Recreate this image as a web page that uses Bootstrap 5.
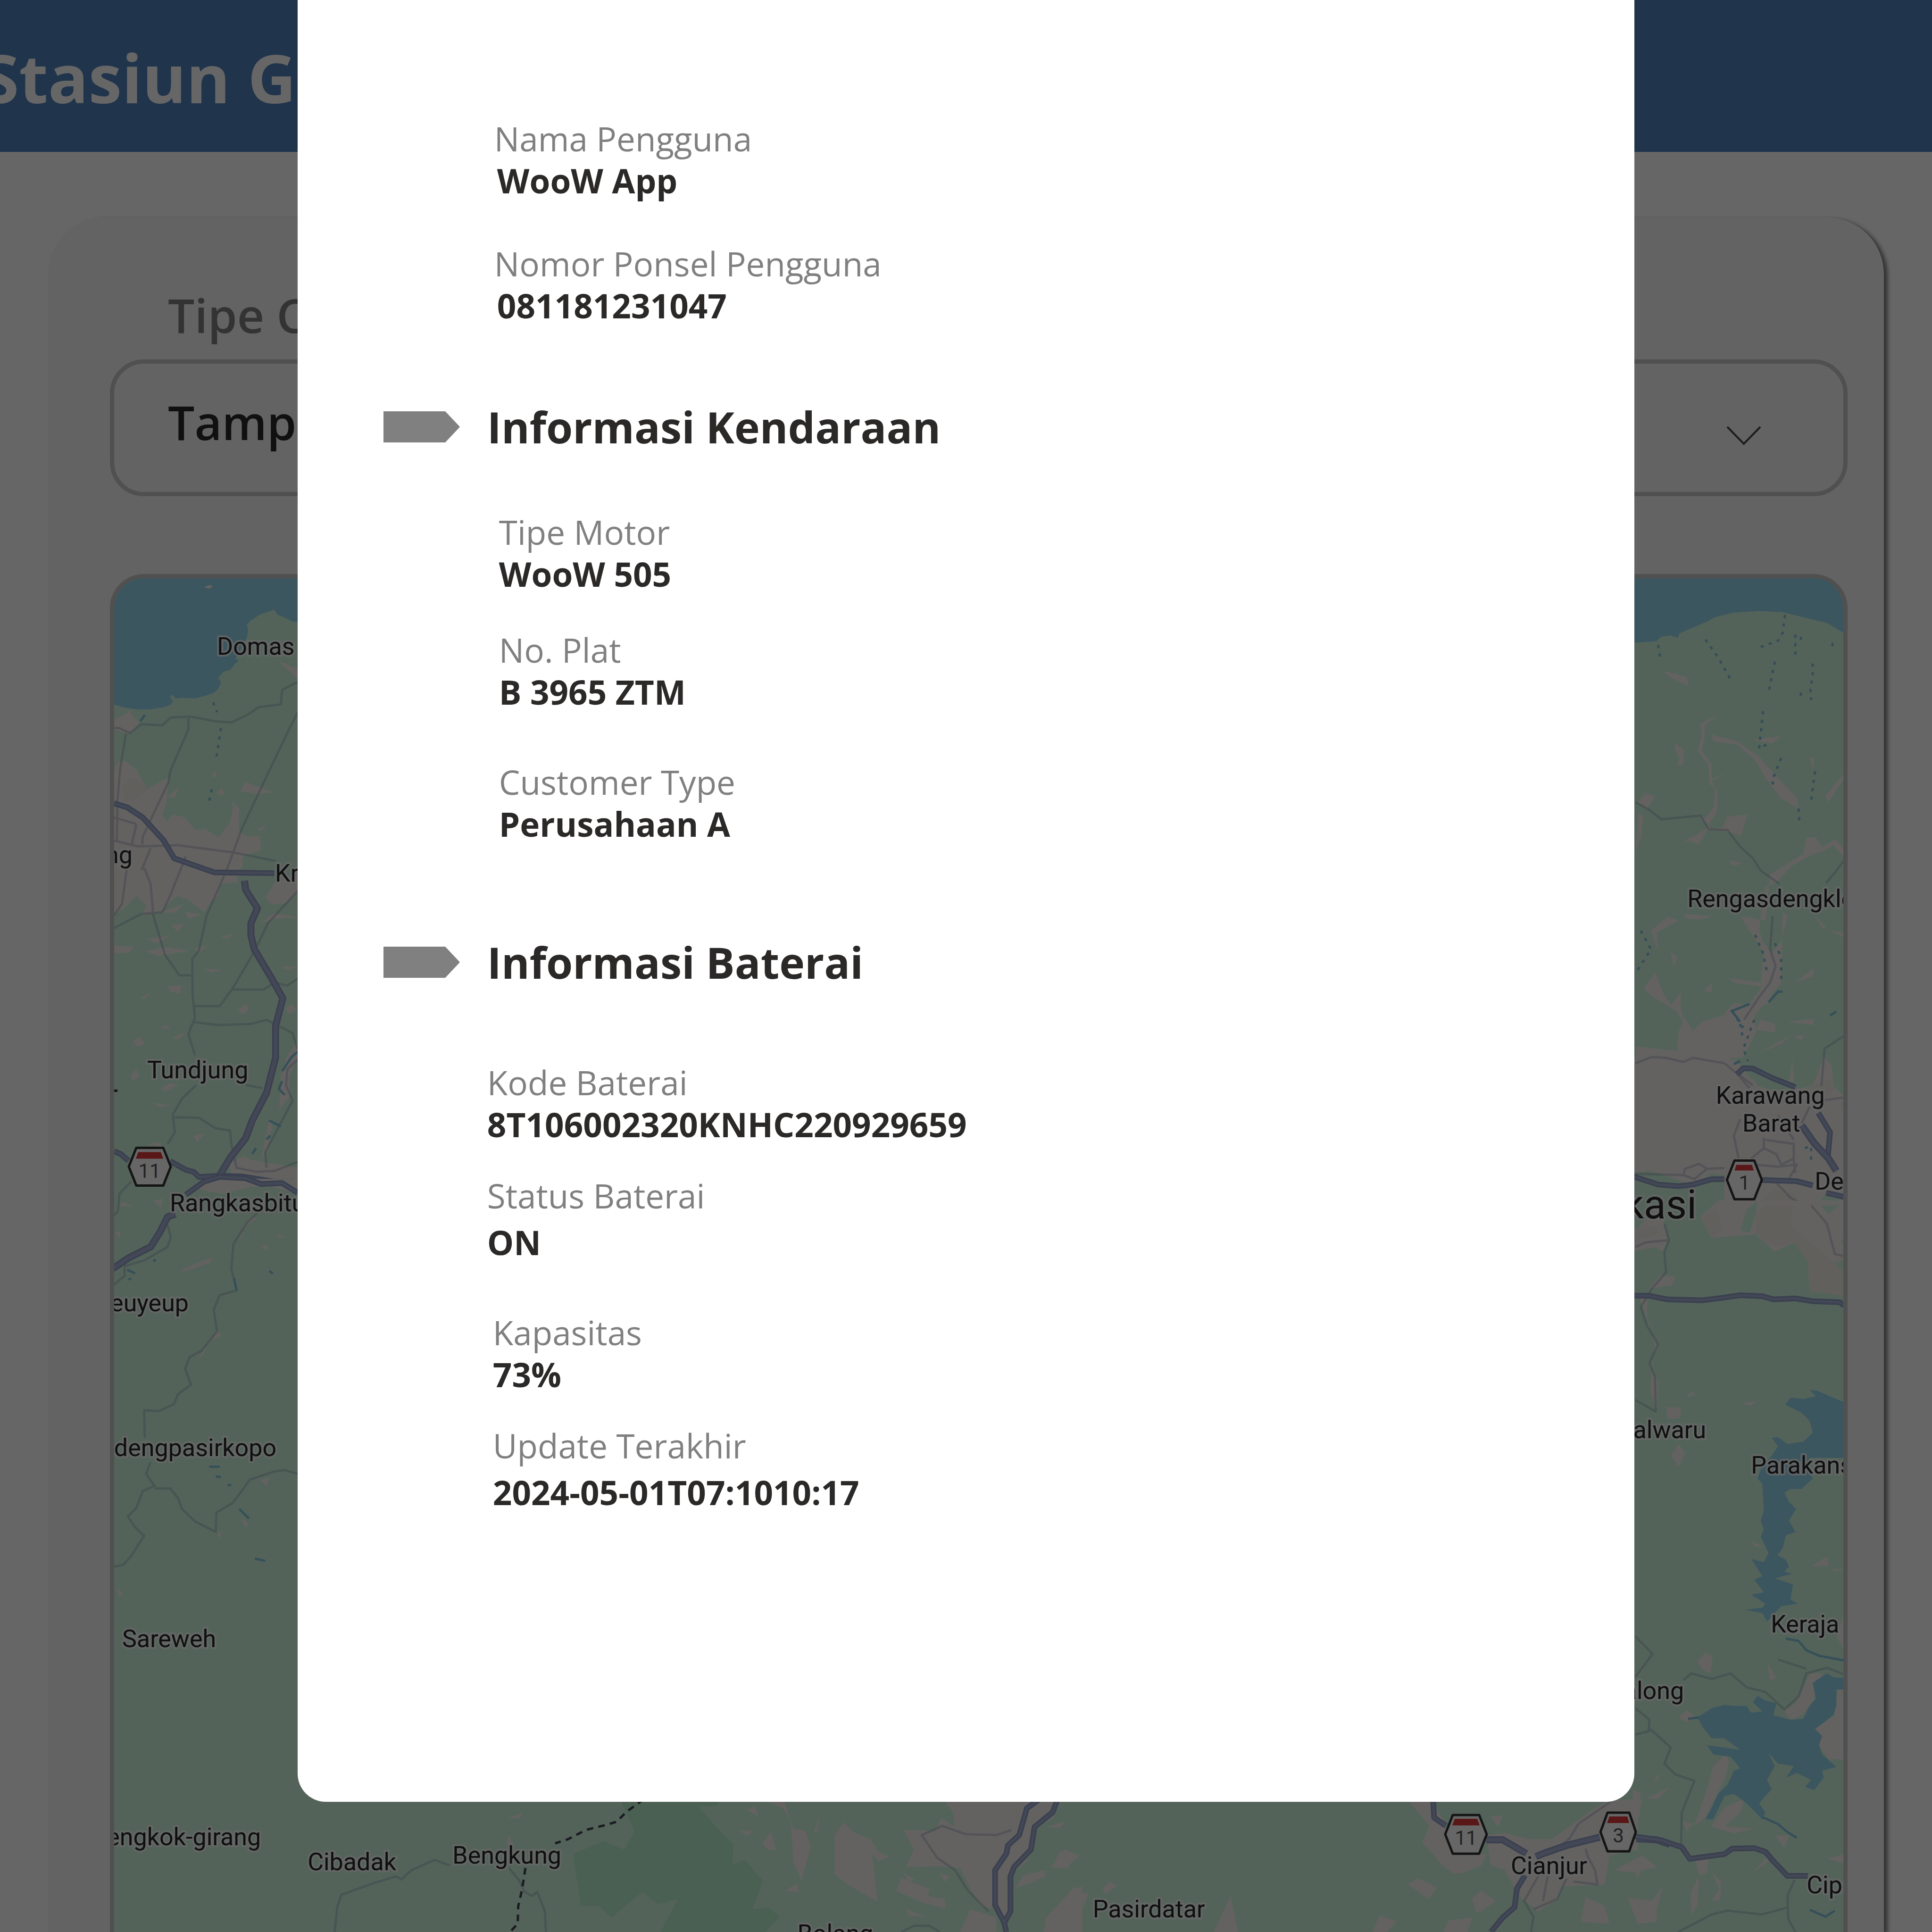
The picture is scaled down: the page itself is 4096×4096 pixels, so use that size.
<!DOCTYPE html>
<html lang="id">
<head>
<meta charset="utf-8">
<meta name="viewport" content="width=device-width, initial-scale=1">
<title>Stasiun Ganti Baterai</title>
<link href="https://cdn.jsdelivr.net/npm/bootstrap@5.3.0/dist/css/bootstrap.min.css" rel="stylesheet">
<style>
  body { font-family: "Open Sans", "Noto Sans", sans-serif; background: #fff; }
  .topbar { background: #5082be; height: 322px; padding: 6px 0 0; }
  .topbar-title { color: #fff; font-size: 142px; line-height: 190px; font-weight: 700; margin-left: -38px; white-space: nowrap; }
  .panel { background: #f8f8f8; margin: 139px 102px 0; padding: 138px 77px 0 131px; border-radius: 120px 120px 0 0; box-shadow: 8px 4px 8px rgba(0, 0, 0, .5); }
  .filter-label { color: #808080; font-size: 100px; line-height: 136px; font-weight: 600; margin: 0 0 27px 123px; }
  .filter-select { height: 290px; border: 9px solid #c8c8c8; border-radius: 72px; background: transparent; color: #282828; font-size: 100px; line-height: 136px; font-weight: 600; padding: 0 280px 26px 114px; appearance: none; }
  .filter-chevron { right: 183px; top: 140px; width: 74px; height: 44px; pointer-events: none; }
  .map-frame { border: 9px solid #c8c8c8; border-bottom: 0; border-radius: 72px 72px 0 0; margin-top: 165px; overflow: hidden; min-height: 0; background: #d2f8e0; }
  .map-frame svg { width: 100%; height: 100%; }
  .map-frame path { vector-effect: non-scaling-stroke; }
  .place { font: 400 52px Roboto, sans-serif; fill: #262626; stroke: #fff; stroke-width: 8px; stroke-linejoin: round; paint-order: stroke; stroke-opacity: .8; }
  .place-city { font-size: 86px; }
  .route-no { font: 400 42px Roboto, sans-serif; fill: #555; text-anchor: middle; }
  .land { fill: #faf6f2; }
  .sand { fill: #f6f0e6; }
  .water { fill: #94d8ee; }
  .forest { fill: #b8f0ce; }
  .field-green { fill: #d2f8e0; }
  .edge-a, .edge-b, .mid-a, .mid-b { fill: none; stroke-linejoin: round; }
  .edge-a { stroke: #92a0c6; stroke-width: 12px; }
  .edge-b { stroke: #92a0c6; stroke-width: 15px; }
  .mid-a { stroke: #a9b3d6; stroke-width: 5px; }
  .mid-b { stroke: #aab3d8; stroke-width: 8px; }
  .minor { fill: none; stroke: rgba(100, 120, 165, .27); stroke-width: 5px; stroke-linejoin: round; }
  .rail { fill: none; stroke: #445; stroke-width: 5px; stroke-dasharray: 14 11; }
  .canal { fill: none; stroke: #86c4d8; stroke-width: 5px; stroke-dasharray: 7 11; }
  .creek { fill: none; stroke: #86c8de; stroke-width: 5px; }
  .modal-backdrop { --bs-backdrop-opacity: .6; width: 100%; height: 100%; }
  .detail-dialog { max-width: 69.2vw; margin: 0 auto; }
  .detail-content { border: 0; border-radius: 0 0 60px 60px; padding: 250px 182px 611px; color: #2b2928; }
  .section-title { font-size: 91px; line-height: 126px; font-weight: 700; gap: 58px; }
  .section-vehicle { margin: 149px 0 116px; }
  .section-battery { margin: 185px 0 148px; }
  .section-arrow { width: 162px; height: 66px; flex: none; }
  .fields-user { margin: 0 0 0 235px; }
  .fields-vehicle { margin: 0 0 0 245px; }
  .fields-battery { margin: 0 0 0 220px; }
  .fields-charge { margin: 0 0 0 232px; }
  .field dt { font-size: 71px; line-height: 88px; font-weight: 400; color: #808080; }
  .field dd { font-size: 71px; line-height: 90px; font-weight: 700; margin: 0; }
  .fields-user dd { padding-left: 6px; }
  .gap-s { margin-top: 62px; }
  .gap-m { margin-top: 72px; }
  .gap-l { margin-top: 87px; }
  .gap-xl { margin-top: 102px; }
  .field.airy dd { padding-top: 10px; }
</style>
</head>
<body class="vh-100 overflow-hidden d-flex flex-column">
<nav class="navbar topbar flex-shrink-0">
  <h1 class="topbar-title mb-0">Stasiun Ganti Baterai</h1>
</nav>
<main class="panel flex-grow-1 d-flex flex-column overflow-hidden">
  <label class="filter-label" for="customerType">Tipe Customer</label>
  <div class="position-relative flex-shrink-0">
    <select class="filter-select w-100 d-block" id="customerType"><option>Tampilkan Semua</option></select>
    <svg class="filter-chevron position-absolute" viewBox="0 0 74 44" fill="none" stroke="#484848" stroke-width="4" aria-hidden="true"><path d="M2 3 37 39 72 3"/></svg>
  </div>
  <div class="map-frame flex-grow-1">
    <svg viewBox="242 1227 3666 2869" preserveAspectRatio="xMinYMin slice" role="img" aria-label="Peta stasiun">
      <!-- north-west -->
      <g transform="matrix(.2759 0 0 .8359 222.8 1205.9)">
        <path class="water" d="M60 0H1500V137L1440 135 1380 125 1325 118 1300 105 1255 110 1190 117 1120 132 1088 143 1100 155 1090 175 1000 230 1030 233 990 245 960 258 910 262 868 278 892 290 870 305 840 315 780 322 690 330 600 328 540 330 515 320 498 325 522 338 500 346 450 352 340 358 250 358 150 353 60 345Z"/>
        <path class="land" d="M760 48 800 42 830 46 800 52ZM60 385 150 372 190 360 210 375 260 390 200 418 130 415 60 408ZM60 520 100 490 150 488 240 510 320 560 430 540 485 533 470 590 440 625 475 642 520 625 600 630 700 665 760 660 870 682 960 645 985 605 970 590 1030 608 1025 665 1080 680 1190 680 1195 715 1120 722 1060 730 1050 758 1010 775 1020 795 890 800 870 830 800 850 760 872 640 840 560 830 500 845 430 870 280 880 320 855 240 830 150 860 60 880ZM1230 835 1300 800 1490 770 1490 820 1380 850 1280 852ZM1040 565 1080 542 1290 568 1180 572ZM480 580 560 555 540 580ZM855 570 900 558 915 575ZM820 528 850 512 850 528ZM1170 660 1240 652 1200 666ZM1330 235 1480 255 1480 280ZM1190 900 1300 875 1480 885 1300 888ZM60 955 220 960 180 975 60 975ZM400 875 600 852 540 872ZM620 872 735 878 640 888ZM510 905 600 902 560 922ZM320 940 500 932 400 950ZM690 965 790 955 720 975ZM890 935 990 925 930 940ZM310 970 480 960 640 970 400 982ZM480 1060 580 1058 580 1078 500 1072ZM270 1090 350 1075 300 1092ZM760 1015 890 1018 820 1024ZM1020 1120 1090 1105 1100 1120 1060 1130ZM1350 1012 1480 1008 1400 1018ZM1390 1115 1440 1105 1470 1120 1410 1130ZM420 1165 470 1158 500 1168ZM215 1200 260 1188 310 1205 250 1212ZM520 1190 620 1175 560 1195ZM200 1285 240 1270 260 1290 210 1298ZM680 1440 760 1432 710 1455ZM370 1355 500 1362 420 1366ZM430 1320 500 1305 560 1310 470 1325ZM330 1460 420 1455 440 1470ZM1350 1290 1400 1235 1480 1200 1480 1240 1410 1290 1420 1340 1340 1370ZM1200 1500 1260 1400 1290 1400 1250 1470ZM960 1510 1060 1490 1120 1500 1480 1520 1480 1568 980 1568Z"/>
        <path class="sand" d="M130 550 210 530 300 545 320 560 260 585 150 590Z"/>
        <path class="minor" d="M70 405 110 405 190 418 280 395 440 398 505 378 660 376 850 388 970 391 1100 370 1180 352 1350 345 1360 308 1480 288M640 380 640 408 500 515 490 540 290 680 285 700M1480 365 1410 410 1050 660 940 760 780 880 720 970 670 990 672 1080 690 1140 640 1180 690 1235M160 420 115 510 95 590 90 690M70 632 240 648M70 690 250 705 560 702 980 720 1310 742M300 760 350 800 370 880 460 980 570 1032 670 1032M70 912 280 876 440 872 500 830 620 730M240 650 205 700M350 710 280 765 M170 755 130 850 70 880M690 1110 880 1110 980 1065 1150 970 1250 900 1480 818M970 1068 1220 1068 1300 1050 1400 1058 1480 1040M670 1150 870 1158 1120 1155 1240 1145 1440 1178 1480 1220M700 1310 590 1345 520 1385 535 1430 480 1460M520 1392 720 1393 850 1420 960 1425 970 1460 1010 1520 1160 1530 1300 1528 1480 1505M1080 1310 1210 1318M1480 1245 1400 1270 1390 1310 1440 1350 1230 1480 1240 1520"/>
        <path class="creek" d="M1480 1225 1430 1240 1360 1275M1360 1300 1335 1320 1380 1335M1260 1400 1350 1415M1240 1448 1270 1438M1130 1485 1160 1470M270 388 305 372"/>
        <path class="canal" d="M830 340 860 365M890 405 850 490M820 560 800 590"/>
        <g class="edge-a"><path id="hw-nw" d="M70 596 170 606 290 632 450 690 530 735 640 748 840 771 1300 773M70 1478 120 1485 180 1502M500 1503 620 1525 680 1530 720 1543 880 1540 1060 1542 1200 1550 1300 1555 1480 1556"/></g>
        <g class="mid-a"><use href="#hw-nw"/></g>
        <g class="edge-b"><path id="hc-nw" d="M1070 792 1080 815 1170 862 1120 900 1120 930 1145 965 1280 1040 1365 1090 1310 1160 1310 1240 1240 1330 1130 1400 1080 1445 960 1495 860 1550 780 1568"/></g>
        <g class="mid-b"><use href="#hc-nw"/></g>
      </g>
      <!-- west and south-west -->
      <g transform="matrix(.2759 0 0 1.024 222.8 2490.4)">
        <path class="land" d="M700 30 800 8 1480 10 1480 40 1200 20 900 40ZM100 65 140 58 210 66ZM370 55 440 50 430 68ZM75 120 120 118 110 132ZM580 198 820 172 810 182 620 200ZM1015 135 1060 118 1050 130ZM1200 152 1240 145 1250 156ZM1310 125 1380 128 1340 132ZM720 378 860 325 900 332 800 345 740 378ZM1190 632 1260 628 1240 645ZM860 745 900 738 880 752ZM1040 712 1100 722 1080 730ZM85 855 140 868 110 872ZM1040 115 1130 88 1170 90Z"/>
        <path class="minor" d="M70 85 100 75 110 40 200 15M1170 80 1090 100 985 145 970 195 1010 240 880 250 835 280 860 325 740 365 650 378 615 402 660 435 560 455 530 475 410 490 300 488 305 545M350 595 315 620 380 645 290 655 240 690 175 708 230 730 300 748 200 790 140 808 70 812M380 650 500 650 560 670 590 692 690 718 850 740 855 700 980 680 1050 655 1110 632 1300 615 1380 612 1480 620M480 105 505 130 480 150 300 178 150 190 150 210 70 228"/>
        <path class="creek" d="M170 197 230 205M180 215 200 218M370 180 390 176M800 605 880 605M850 625 890 627M940 643 970 643M1030 692 1105 712M1150 795 1230 800M1260 200 1290 205M990 215 1010 240"/>
        <g class="edge-a"><path id="hw-w" d="M620 42 760 15 880 5 1080 8 1200 20 1360 18 1480 38"/></g>
        <g class="mid-a"><use href="#hw-w"/></g>
        <g class="edge-b"><path id="hc-w" d="M60 195 180 173 350 150 420 120 480 88 540 82"/></g>
        <g class="mid-b"><use href="#hc-w"/></g>
      </g>
      <!-- south -->
      <g transform="matrix(1.0867 0 0 .21845 589.8 3768.3)">
        <path class="forest" d="M665 200H865L855 280 820 285 845 430 888 650 885 850 910 800 945 1000 925 1280 955 1260 978 1350 950 1500H745L780 1180 740 1230 710 1110 650 1360 625 1250 590 1250 575 740 635 620 675 700 695 520Z"/>
        <path class="land" d="M940 200 985 215 1005 500 1028 520 1038 680 1020 1000 1005 820 1000 420 985 300ZM915 320 930 280 935 370ZM900 520 925 520 915 570ZM945 640 960 530 965 600 970 700 955 700ZM1085 560 1103 440 1125 540 1155 600 1170 720 1190 770 1170 810 1158 740 1168 1200 1115 1050 1085 940ZM1295 200H1530L1510 400 1470 500 1460 820 1420 960 1430 1300 1415 1400 1395 1280 1370 1240 1350 1080 1330 880 1290 860 1225 870 1240 700 1220 510 1280 520 1293 400 1320 480 1315 330ZM1205 1100 1215 980 1270 1080 1265 1150 1300 1180 1300 1270 1260 1220ZM1220 930 1240 990 1230 1010ZM1290 930 1310 960 1300 1010ZM1440 1050 1455 950 1500 900 1470 1010ZM1525 720 1555 740 1540 880 1510 860ZM1500 480 1530 430 1520 490ZM1495 1380 1550 1080 1568 1060V1500H1500ZM1225 1280 1260 1350 1230 1340ZM990 1100 1010 1030 1015 1110ZM450 390 475 350 470 400ZM445 640 450 560 457 650ZM1055 400 1052 540 1045 520ZM1350 1280 1400 1360 1400 1500H1330Z"/>
        <path class="minor" d="M110 1500 115 1260 123 1140 150 1090 190 1020 230 960 240 990 260 900 305 800 335 855M450 880 470 1000 480 1110 495 1150 505 1110 520 1300 522 1500M1215 1500 1240 1440 1270 1440 1290 1500M1430 510 1400 560 1340 550 1295 470 1255 560 1285 780 1320 900 1345 1100 1385 1300"/>
        <path class="rail" d="M712 216 680 330 660 430 640 460 600 510 565 600 540 640M482 880 478 1010 474 1120 468 1250 467 1420 452 1500"/>
        <g class="edge-a"><path id="hw-s" d="M1483 216 1460 300 1445 560 1423 660 1420 740 1398 900 1398 1240 1415 1400 1420 1500M1520 216 1510 340 1475 480 1468 700 1435 870 1428 960 1428 1300 1416 1410"/></g>
        <g class="mid-a"><use href="#hw-s"/></g>
      </g>
      <!-- south-east -->
      <g transform="matrix(1.0031 0 0 .21845 1966.1 3768.3)">
        <path class="land" d="M1015 216 1065 216 1090 420 1100 560 1130 740 1180 740 1170 850 1130 930 1110 930 1085 840 1060 700 1045 640 1060 470 1035 330ZM1180 560 1220 540 1270 600 1320 600 1370 430 1400 330 1440 216 1510 216 1500 380 1500 700 1440 760 1430 1040 1380 1050 1340 1060 1330 1180 1290 1300 1250 1150 1220 900 1190 850ZM260 870 290 700 320 760 290 880ZM370 1080 385 1010 400 1050 375 1130ZM250 1400 300 1150 340 1120 330 1250 290 1300 280 1500H245ZM180 1080 240 900 250 960 200 1050ZM255 480 290 430 280 490ZM605 1500 640 1150 655 1500ZM1015 1040 1035 980 1075 1070 1060 1180ZM940 1500 955 1340 990 1400 970 1500ZM1150 1180 1170 1100 1200 1200 1160 1320ZM1390 1160 1430 1250 1440 1420 1380 1400ZM1450 900 1510 760 1540 870 1490 920ZM1190 380 1215 370 1205 480ZM1480 1170 1540 1200 1540 1400 1500 1420ZM1100 1390 1150 1360 1140 1500H1090Z"/>
        <path class="minor" d="M1445 230 1375 450 1355 600 1320 720M1390 690 1395 770 1410 900 1415 1040 1365 1010M1290 960 1260 1200 1280 1350 1275 1500M1350 980 1330 1180 1280 1280M1310 960 1300 1200"/>
        <g class="edge-a"><path id="hw-se" d="M1068 216 1070 390 1095 470M1262 950 1245 1080 1240 1260 1215 1360 1190 1500"/></g>
        <g class="mid-a"><use href="#hw-se"/></g>
        <g class="edge-b"><path id="hc-se" d="M1180 605 1215 605 1265 740M1285 770 1300 740 1350 660 1420 580M1497 595 1540 605 1568 650"/></g>
        <g class="mid-b"><use href="#hc-se"/></g>
      </g>
      <!-- north-east -->
      <g transform="matrix(.3344 0 0 .8777 3440.6 1205.9)">
        <path class="water" d="M60 0H1410V160L1370 150 1290 132 1160 120 1010 106 860 103 700 107 580 118 540 127 430 145 355 157 345 168 300 162 240 165 210 176 60 180Z"/>
        <path class="land" d="M250 248 400 262 415 285 330 270ZM325 420 385 440 375 475 340 475 360 460 330 440ZM590 355 490 375 495 410 470 440 540 475 545 520 580 530 575 575 520 605 410 580 490 600 560 630 630 625 660 600 785 595 745 645 700 640 600 632 530 632 480 665 390 657 480 640 520 630 590 590 595 540 560 515 640 495 560 510 560 475 495 440 515 410 515 380ZM560 402 720 418 860 455 950 495 1100 555 1110 580 1000 555 900 505 840 465 720 425 570 418ZM820 415 1000 405 940 422ZM90 565 140 543 200 550 150 580ZM95 590 125 600 110 650 80 680ZM1180 455 1210 460 1200 485ZM1280 550 1395 498 1395 508 1300 565ZM665 705 760 712 700 718ZM930 740 1140 690 1160 650 1220 650 1260 675 1340 655 1400 680 1395 695 1330 668 1270 682 1200 690 1060 720 980 755 900 770 860 870 880 900 940 930 1000 900 1040 840 1010 830 1000 980 920 1050 850 1060 760 1090 840 1040 900 1010 1000 960 1000 1000 830 1080 840 1120 760 1180 500 1190 80 1185 80 1155 340 1165 350 1120 390 1085 440 1118 500 1095 630 1080 700 1050 790 1055 880 1010 700 1000 670 990 870 1000 890 930 820 885 740 840 900 850ZM390 835 560 840 480 848 390 845ZM175 875 280 842 350 850 210 880 215 920ZM130 1015 200 975 250 1025 300 1055 365 1025 360 1060 400 1110 340 1070 280 1055 190 1035ZM300 925 340 940 320 960ZM515 1020 560 1000 560 1025ZM1210 840 1280 865 1270 872ZM1310 875 1395 880 1395 890ZM1090 1000 1210 965 1200 985ZM1040 1095 1210 1088 1200 1102ZM870 1090 960 1100 960 1120 840 1115ZM860 1170 1050 1130 1000 1148ZM1080 1130 1145 1128 1130 1140ZM60 1180 560 1170 720 1190 820 1240 600 1290 700 1220 1050 1260 1200 1250 1270 1180 1320 1200 1330 1250 1400 1275 1400 1568H60ZM1050 1240 1070 1185 1080 1240Z"/>
        <path class="sand" d="M1180 1255 1310 1230 1330 1260 1270 1280ZM880 1520 960 1500 1100 1510 1080 1568H860ZM490 1568 560 1545 620 1568Z"/>
        <path d="M60 1460 160 1455 300 1470 440 1490 560 1460 640 1465 640 1530 600 1568H60ZM780 1568 830 1545 870 1568ZM1220 1540 1280 1510 1400 1530V1568H1240ZM800 1212 900 1225 1080 1255 950 1262 850 1250ZM900 1465 960 1480H900ZM1380 1290 1400 1285V1310Z" class="field-green"/>
        <path class="minor" d="M76 565 160 582 240 606 490 597 540 630 660 632 740 672 820 700 870 730 990 762M945 840 930 920 965 960 930 1000 860 1035 765 1090M1400 705 1350 730 1285 760M1400 1128 1275 1160 1255 1250M76 1195 180 1180 270 1182 380 1192 440 1182 640 1195 720 1220 800 1255M740 1225 820 1248M740 1330 700 1370 730 1425M890 1375 890 1405M810 1425 890 1400 970 1415 1000 1440 1080 1425M900 1380 1080 1390 1080 1430 1090 1460M980 1320 1080 1380M1400 1278 1250 1285M1180 1300 1130 1340M830 1440 980 1445 1100 1440 1040 1480M76 1462 380 1465 390 1450 480 1438 530 1450 450 1475 380 1465M530 1450 640 1448M960 1480 1060 1520 1230 1555"/>
        <path class="canal" d="M520 172 600 215 690 275M870 190 980 175 1010 155 1025 110M960 225 920 300M885 345 870 400 860 435 910 425M1090 160 1090 215M1125 165V175M1200 230 1200 260 1185 290 1190 318M1125 300V320M1000 458 940 515 960 525M1215 490 1190 560M1110 580 1115 610M220 185 235 220M110 875 175 920 90 970M960 905 1000 940 1000 1000M830 1090 760 1160 790 1190M740 1100 760 1140M1325 180V195M835 885 885 930 910 975M690 1070 760 1110M1150 1400 1190 1395 1190 1440"/>
        <path class="creek" d="M680 1070 800 1052M920 1048 980 1022 1010 1022M690 1070 740 1095M700 1197 740 1190M1310 1080 1350 1070"/>
        <g class="edge-a"><path id="hw-ne" d="M60 1468 220 1488 350 1492 440 1488 560 1475 640 1475M880 1477 1100 1480 1200 1490M720 1222 760 1207 820 1208 940 1230 1090 1253M1285 1508 1400 1518M1235 1315 1310 1362 1295 1425"/></g>
        <g class="mid-a"><use href="#hw-ne"/></g>
        <g class="edge-b"><path id="hc-ne" d="M1130 1345 1210 1388 1300 1425 1350 1455"/></g>
        <g class="mid-b"><use href="#hc-ne"/></g>
      </g>
      <!-- east -->
      <g transform="matrix(.3344 0 0 .9822 3440.6 2555.9)">
        <path class="land" d="M230 0 280 75 250 100 200 90 60 100V60ZM600 -10H1400V190L1180 185 1170 120 1080 80 960 100 840 62 560 70 490 25ZM160 180 240 150 330 155 310 172ZM105 200 150 205 150 260 220 300 170 350 220 380 210 440 170 400 180 350 200 300ZM270 435 365 437 355 460 280 460ZM305 540 350 515 390 535 350 565ZM400 415 430 400 455 408ZM750 428 840 422 810 432ZM820 725 890 738 830 735ZM1200 778 1290 758 1300 778ZM1310 785 1400 785 1350 790ZM470 985 520 965 565 975 550 1010 500 1000ZM915 990 970 1020 930 1025ZM1020 1090 1090 1075 1150 1035 1180 1010 1260 1010 1200 1070 1130 1100 1060 1110ZM1215 1130 1340 1100 1360 1040 1400 1045V1195L1300 1195 1240 1165ZM350 1105 400 1090 460 1105 400 1115ZM570 1210 650 1185 670 1200 640 1240 520 1320 450 1340 540 1250ZM60 1260 110 1270 100 1320 60 1320ZM150 1280 290 1255 220 1280ZM195 1240 230 1225 220 1240ZM560 1340 640 1300 770 1280 740 1310 640 1340 820 1345 700 1355ZM450 1400 540 1410 530 1440 480 1445ZM560 1440 620 1460 610 1475ZM820 1440 930 1400 940 1410ZM960 1360 1050 1360 1020 1385ZM60 1430 150 1410 90 1450ZM140 1520 250 1470 200 1530ZM430 1480 480 1450 470 1510 430 1530ZM380 1330 440 1335 400 1350ZM560 1500 620 1470 610 1500ZM1300 1410 1400 1400 1400 1420ZM1350 930 1400 880V960Z"/>
        <path class="sand" d="M500 30 580 5 640 50 570 70ZM840 20 900 0 1080 0 1060 40 1150 70 1330 120 1400 110V195L1180 185 1170 120 1080 80 960 90 840 60ZM60 50 200 45 230 60 60 80Z"/>
        <path class="field-green" d="M740 55 780 10 850 -10 840 20 800 60ZM1250 0H1370L1300 20ZM1340 125 1400 118V148ZM1380 75 1400 70V100Z"/>
        <path class="water" d="M1025 430 1060 415 1140 418 1220 412 1180 398 1230 400 1310 412 1400 425V545H1180L1160 560 1200 590 1130 612 1060 612 1020 620 1050 640 1095 655 1050 680 1090 705 1030 712 1010 740 975 755 1030 765 1050 780 1020 790 1070 795 960 805 1075 818 1060 850 1105 860 1000 865 910 898 880 880 770 873 880 868 900 860 810 840 890 835 830 808 880 800 810 763 890 770 920 750 870 715 890 700 870 680 890 660 880 600 850 590 880 560 930 545 980 520 940 502 980 500 1040 515 1140 510 1200 490 1180 465 1130 448ZM470 1105 560 1085 640 1078 700 1080 780 1080 810 1095 880 1092 820 1072 850 1058 900 1068 970 1075 950 1100 1060 1110 1140 1108 1180 1080 1220 1065 1200 1030 1290 1010 1330 1018 1400 1020V1045L1350 1045 1350 1080 1330 1100 1215 1130 1260 1145 1240 1165 1260 1185 1350 1212 1260 1220 1270 1235 1210 1262 1150 1255 1190 1240 1100 1225 1030 1235 1080 1210 980 1205 920 1182 960 1210 910 1240 940 1260 860 1290 900 1310 880 1325 780 1290 700 1270 640 1275 570 1325 520 1325 560 1300 600 1270 660 1250 700 1220 740 1215 680 1190 570 1185 530 1165 640 1170 740 1175 640 1150 560 1150 500 1125Z"/>
        <path class="minor" d="M76 90 140 80 290 75 260 40M290 75 260 100 270 145 180 180 110 220 150 260 220 300 165 340 200 370 205 445 76 420M76 930 185 968 76 1018M380 1025 430 1010 560 1022 680 1010 780 1040 900 1050 1020 1088 1110 1060 1160 1010 1290 998 1400 1012M76 1085 165 1110 160 1135 76 1142M170 1130 300 1170 260 1205 330 1228 450 1242 370 1310 365 1380M1085 1455 1040 1490 1045 1540 1090 1568M345 1568 450 1550 560 1530 660 1522 880 1530 1045 1515M980 980 1160 1000M1190 0 1290 40 1340 105 1400 110"/>
        <path class="creek" d="M1030 935 1110 940 1160 960 1240 972 1400 982M410 1108 480 1105M880 1320 980 1335 1030 1350 1100 1365M1180 1520 1280 1535 1340 1522"/>
        <g class="edge-a"><path id="hw-e" d="M60 195 160 195 280 203 500 205 620 200 740 194 880 196 950 203 1090 201 1200 207 1370 209 1400 216M76 1362 240 1370 370 1385 420 1410 640 1400 690 1388 830 1387 900 1395 950 1415 1040 1447 1170 1447"/></g>
        <g class="mid-a"><use href="#hw-e"/></g>
      </g>
      <!-- route shields -->
      <g fill="#fff" stroke="#333" stroke-width="5" stroke-linejoin="round">
        <path d="M289 2434H346L362 2474 346 2514H289L273 2474Z"/>
        <path d="M3676 2461H3718L3734 2502 3718 2543H3676L3660 2502Z"/>
        <path d="M3079 3848H3135L3151 3889 3135 3930H3079L3063 3889Z"/>
        <path d="M3407 3843H3453L3467 3884 3453 3925H3407L3392 3884Z"/>
      </g>
      <path d="M293 2443H341L346 2457H288ZM3680 2470H3713L3717 2482H3676ZM3083 3856H3131L3136 3870H3078ZM3411 3851H3449L3453 3865H3406Z" fill="#e13a3a"/>
      <text class="route-no" x="317" y="2498">11</text>
      <text class="route-no" x="3697" y="2523">1</text>
      <text class="route-no" x="3107" y="3911">11</text>
      <text class="route-no" x="3430" y="3906">3</text>
      <path d="M242 2313H249" stroke="#333" stroke-width="5"/>
      <g class="place">
        <text x="460" y="1389">Domas</text>
        <text x="281" y="1831" text-anchor="end">Serang</text>
        <text x="583" y="1870">Kragilan</text>
        <text x="312" y="2287">Tundjung</text>
        <text x="360" y="2569">Rangkasbitung</text>
        <text x="400" y="2780" text-anchor="end">Leuyeup</text>
        <text x="586" y="3087" text-anchor="end">Gedengpasirkopo</text>
        <text x="259" y="3492">Sareweh</text>
        <text x="553" y="3912" text-anchor="end">Cengkok-girang</text>
        <text x="652" y="3965">Cibadak</text>
        <text x="959" y="3951">Bengkung</text>
        <text x="1690" y="4117">Bolang</text>
        <text x="2316" y="4065">Pasirdatar</text>
        <text x="3202" y="3973">Cianjur</text>
        <text x="3576" y="1924">Rengasdengklok</text>
        <text x="3752" y="2341" text-anchor="middle">Karawang</text>
        <text x="3754" y="2400" text-anchor="middle">Barat</text>
        <text x="3846" y="2523">Dermayu</text>
        <text x="3616" y="3049" text-anchor="end">Jalwaru</text>
        <text x="3711" y="3124">Parakansari</text>
        <text x="3753" y="3461">Keraja</text>
        <text x="3569" y="3602" text-anchor="end">Cibalong</text>
        <text x="3829" y="4014">Cipatat</text>
        <text class="place-city" x="3596" y="2584" text-anchor="end">Bekasi</text>
      </g>
    </svg>
  </div>
</main>

<div class="modal-backdrop show"></div>
<div class="modal d-block overflow-hidden" tabindex="-1" role="dialog" aria-modal="true" aria-label="Informasi Pengguna">
  <div class="modal-dialog detail-dialog">
    <div class="modal-content detail-content">
      <dl class="fields-user">
        <div class="field"><dt>Nama Pengguna</dt><dd>WooW App</dd></div>
        <div class="field gap-l"><dt>Nomor Ponsel Pengguna</dt><dd>081181231047</dd></div>
      </dl>
      <h2 class="section-title section-vehicle d-flex align-items-center">
        <svg class="section-arrow" viewBox="0 0 162 66" aria-hidden="true"><path d="M0 0H131L162 33 131 66H0Z" fill="#808080"/></svg>
        Informasi Kendaraan
      </h2>
      <dl class="fields-vehicle">
        <div class="field"><dt>Tipe Motor</dt><dd>WooW 505</dd></div>
        <div class="field gap-m"><dt>No. Plat</dt><dd>B 3965 ZTM</dd></div>
        <div class="field gap-xl"><dt>Customer Type</dt><dd>Perusahaan A</dd></div>
      </dl>
      <h2 class="section-title section-battery d-flex align-items-center">
        <svg class="section-arrow" viewBox="0 0 162 66" aria-hidden="true"><path d="M0 0H131L162 33 131 66H0Z" fill="#808080"/></svg>
        Informasi Baterai
      </h2>
      <dl class="fields-battery">
        <div class="field"><dt>Kode Baterai</dt><dd>8T106002320KNHC220929659</dd></div>
        <div class="field gap-s airy"><dt>Status Baterai</dt><dd>ON</dd></div>
      </dl>
      <dl class="fields-charge">
        <div class="field gap-xl"><dt>Kapasitas</dt><dd>73%</dd></div>
        <div class="field gap-s airy"><dt>Update Terakhir</dt><dd>2024-05-01T07:1010:17</dd></div>
      </dl>
    </div>
  </div>
</div>
<script src="https://cdn.jsdelivr.net/npm/bootstrap@5.3.0/dist/js/bootstrap.bundle.min.js"></script>
</body>
</html>
